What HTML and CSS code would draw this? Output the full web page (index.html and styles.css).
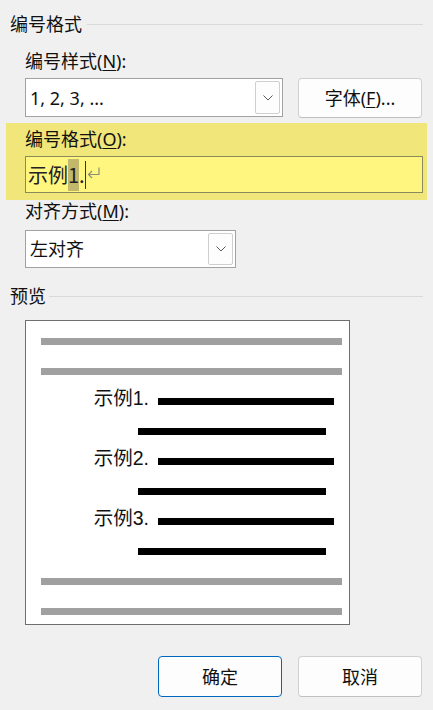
FILE: index.html
```html
<!DOCTYPE html>
<html lang="zh-CN">
<head>
<meta charset="utf-8">
<title>编号格式</title>
<link rel="stylesheet" href="styles.css">
</head>
<body>
<div class="dialog">
  <div class="group-head"><span class="group-title">编号格式</span><span class="rule"></span></div>

  <div class="label l1">编号样式(<u>N</u>):</div>
  <div class="row1">
    <div class="combo combo-style">
      <span class="combo-text">1, 2, 3, ...</span>
      <span class="drop"><svg width="10" height="6" viewBox="0 0 10 6"><polyline points="0.5,0.5 5,5 9.5,0.5" fill="none" stroke="#5a5a5a" stroke-width="1"/></svg></span>
    </div>
    <button class="btn btn-font">字体(<u>F</u>)...</button>
  </div>

  <div class="band">
    <div class="label l2">编号格式(<u>O</u>):</div>
    <div class="fmt-input">
      <span class="fmt-text">示例<span class="sel">1</span>.</span><span class="caret"></span><svg class="ret" width="13" height="12" viewBox="0 0 13 12"><polyline points="12,0.5 12,7.5 1.5,7.5" fill="none" stroke="#8c8c7a" stroke-width="1.2"/><polyline points="5,4 1.5,7.5 5,11" fill="none" stroke="#8c8c7a" stroke-width="1.2"/></svg>
    </div>
  </div>

  <div class="label l3">对齐方式(<u>M</u>):</div>
  <div class="combo combo-align">
    <span class="combo-text">左对齐</span>
    <span class="drop"><svg width="10" height="6" viewBox="0 0 10 6"><polyline points="0.5,0.5 5,5 9.5,0.5" fill="none" stroke="#5a5a5a" stroke-width="1"/></svg></span>
  </div>

  <div class="group-head head2"><span class="group-title">预览</span><span class="rule"></span></div>

  <div class="preview">
    <div class="bar gray"></div>
    <div class="bar gray"></div>
    <div class="num-row"><span class="num">示例1.</span><span class="bar black first"></span></div>
    <div class="bar black indent"></div>
    <div class="num-row"><span class="num">示例2.</span><span class="bar black first"></span></div>
    <div class="bar black indent"></div>
    <div class="num-row"><span class="num">示例3.</span><span class="bar black first"></span></div>
    <div class="bar black indent"></div>
    <div class="bar gray"></div>
    <div class="bar gray last"></div>
  </div>

  <div class="actions">
    <button class="btn btn-ok">确定</button>
    <button class="btn btn-cancel">取消</button>
  </div>
</div>
</body>
</html>
```

FILE: styles.css
```css
html, body {
  margin: 0;
  padding: 0;
  background: #f0f0f0;
}
body {
  font-family: "Noto Sans", "Noto Sans CJK SC", sans-serif;
  font-size: 18px;
  color: #111;
  width: 433px;
  height: 710px;
  overflow: hidden;
}
.dialog {
  padding-top: 12px;
}
u {
  text-decoration: underline;
  text-underline-offset: 2px;
  text-decoration-thickness: 1px;
}
.group-head {
  display: flex;
  align-items: center;
  height: 24px;
  padding: 0 10px;
  gap: 5px;
}
.group-title {
  line-height: 24px;
}
.rule {
  flex: 1;
  height: 1px;
  background: #d9d9d9;
}
.head2 {
  margin-top: 16px;
  gap: 3px;
}
.label {
  margin-left: 25px;
  height: 24px;
  line-height: 24px;
  white-space: nowrap;
}
.l1 {
  margin-top: 13px;
}
.row1 {
  margin-top: 5px;
  margin-left: 25px;
  display: flex;
  align-items: flex-start;
  gap: 15px;
  height: 40px;
}
.combo {
  box-sizing: border-box;
  display: flex;
  align-items: center;
  background: #fff;
  border: 1px solid #a2a2a2;
  padding: 0 2px 0 4px;
}
.combo-style {
  width: 258px;
  height: 39px;
}
.combo-align {
  margin-left: 25px;
  margin-top: 8px;
  width: 211px;
  height: 38px;
}
.combo-text {
  flex: 1;
  line-height: 24px;
  white-space: nowrap;
}
.drop {
  box-sizing: border-box;
  width: 25px;
  height: calc(100% - 4px);
  border: 1px solid #cfcfcf;
  border-radius: 2px;
  background: #fdfdfd;
  display: flex;
  align-items: center;
  justify-content: center;
}
.btn {
  box-sizing: border-box;
  font-family: "Noto Sans", "Noto Sans CJK SC", sans-serif;
  font-size: 18px;
  color: #111;
  background: #fdfdfd;
  border: 1px solid #d0d0d0;
  border-bottom-color: #c0c0c0;
  border-radius: 4px;
  padding: 0;
  line-height: 24px;
}
.btn-font {
  width: 124px;
  height: 40px;
}
.band {
  margin: 5px 6px 0;
  height: 77px;
  box-sizing: border-box;
  background: #f0e67a;
  padding: 4px 4px 7px 19px;
}
.band .label {
  margin-left: 0;
}
.fmt-input {
  box-sizing: border-box;
  margin-top: 5px;
  height: 37px;
  background: #fff680;
  border: 1px solid #8a8a5c;
  display: flex;
  align-items: center;
  padding-left: 2px;
}
.fmt-text {
  font-family: "Noto Sans CJK SC", sans-serif;
  font-size: 20px;
  line-height: 32px;
  color: #222;
  white-space: nowrap;
}
.sel {
  background: #c1b86b;
  display: inline-block;
  line-height: 32px;
}
.caret {
  width: 1px;
  height: 28px;
  background: #333;
  margin-left: 0;
}
.ret {
  margin-left: 1px;
  margin-top: -4px;
}
.l3 {
  height: 22px;
  line-height: 22px;
}
.preview {
  box-sizing: border-box;
  margin: 12px 0 0 25px;
  width: 325px;
  height: 305px;
  background: #fff;
  border: 1px solid #6f6f6f;
  padding: 17px 7px 9px 15px;
}
.bar {
  display: block;
  height: 7px;
  margin-bottom: 23px;
}
.gray {
  background: #a0a0a0;
}
.black {
  background: #000;
}
.last {
  margin-bottom: 0;
}
.indent {
  margin-left: 97px;
  width: 188px;
}
.num-row {
  display: flex;
  align-items: center;
  height: 7px;
  margin-bottom: 23px;
}
.num {
  width: 108px;
  text-align: right;
  font-family: "Liberation Sans", "Noto Sans CJK SC", sans-serif;
  font-size: 19.5px;
  line-height: 24px;
  margin-bottom: 8px;
  white-space: nowrap;
  color: #111;
}
.num-row .first {
  margin: 0 0 0 9px;
  width: 176px;
}
.actions {
  margin-top: 31px;
  display: flex;
  padding-left: 158px;
  gap: 16px;
}
.actions .btn {
  width: 124px;
  height: 41px;
}
.btn-ok {
  border: 1px solid #0067c0;
}
```
